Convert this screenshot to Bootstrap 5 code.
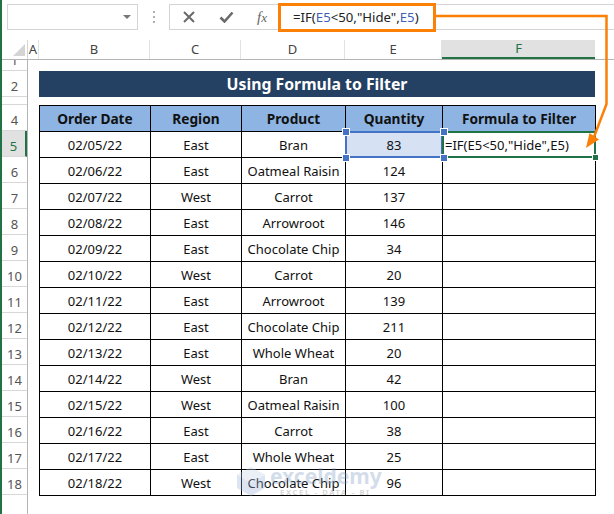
<!DOCTYPE html>
<html lang="en">
<head>
<meta charset="utf-8">
<title>Using Formula to Filter</title>
<link rel="stylesheet" href="https://cdn.jsdelivr.net/npm/bootstrap@5.3.0/dist/css/bootstrap.min.css">
<style>
html,body{margin:0;height:514px;overflow:hidden;background:#fff}
body{font-family:"Noto Sans","Open Sans",sans-serif;font-size:13px;color:#111;width:614px;position:relative}
.xl-app{height:514px;border-left:2px solid #217346;background:#fff}
.xl-bar{height:40px;padding:4px 0 0 5px;background:#fff}
.xl-name{width:131px;height:26px;border:1px solid #d4d4d4;padding-right:6px}
.xl-caret{width:0;height:0;border-left:4px solid transparent;border-right:4px solid transparent;border-top:4px solid #777}
.xl-dots{width:31px;height:26px}
.xl-dots i{display:block;width:2px;height:2px;background:#b0b0b0;margin:1.500px auto}
.xl-btns{width:111px;height:26px;border:1px solid #d4d4d4;padding:0 12px 0 13px}
.xl-fx{font-family:"Liberation Serif",serif;font-style:italic;font-size:15px;color:#666;line-height:1}
.xl-input{flex:1;height:26px;border-top:1px solid #d4d4d4;border-bottom:1px solid #d4d4d4}
.xl-hdr{height:20px;border-bottom:1px solid #b5b5b5;background:#fff;font-size:13px;color:#444}
.xl-corner{width:26px;position:relative;border-right:1px solid #d4d4d4}
.xl-corner::after{content:"";position:absolute;right:2px;bottom:3px;border-left:12px solid transparent;border-bottom:12px solid #d4d4d4}
.xl-h{display:flex;align-items:center;justify-content:center;border-right:1px solid #e2e2e2}
.xl-h.on{background:#e1e1e1;border-bottom:2px solid #217346;color:#217346;border-right:0}
.xl-a{width:11px}.xl-b{width:111px}.xl-c{width:91px}.xl-d{width:104px}.xl-e{width:97px}.xl-f{width:153px}
.xl-body{height:454px;overflow:hidden}
.xl-rows{width:26px;border-right:1px solid #b5b5b5;font-size:13px;color:#555}
.xl-r{display:flex;align-items:flex-end;justify-content:center;border-bottom:1px solid #d8d8d8;height:26px;line-height:20px;overflow:hidden}
.xl-r.sm1{height:11px}.xl-r.sm3{height:8px;line-height:26px}
.xl-r.on{background:#e1e1e1;color:#217346;border-right:2px solid #217346}
.xl-sheet{padding:11px 0 0 11px}
.xl-banner{width:556px;height:26px;background:#244062;color:#fff;font-weight:700;font-size:15.800px;line-height:26px;text-align:center;margin-bottom:8px}
.xl-table{width:556px;table-layout:fixed;border-collapse:collapse;margin:0}
.xl-table th,.xl-table td{height:26px;padding:0;border:1px solid #000;text-align:center;vertical-align:middle;line-height:24px;font-size:13px;white-space:nowrap;background:#fff}
.xl-table th{background:#8db4e2;font-weight:700;font-size:13.700px}
.xl-table td.sel{background:#d6e2f4}
.xl-table td.edit{text-align:left;padding-left:2px;font-size:13px}
.xl-selE{position:absolute;left:345px;top:131px;width:98px;height:27px;border:2px solid #4472c4;pointer-events:none}
.xl-selF{position:absolute;left:442px;top:131px;width:154px;height:27px;border:2px solid #217346;pointer-events:none}
.xl-dot{position:absolute;width:6px;height:6px;background:#4472c4;border:1px solid #fff;box-sizing:content-box}
.xl-gdot{position:absolute;left:592px;top:154px;width:7px;height:7px;background:#217346;border:1px solid #fff}
.xl-orange{position:absolute;left:278px;top:3px;width:158px;height:29px;border:3px solid #fb8005;padding-left:12px;line-height:23px;font-size:13.200px;color:#222;background:#fff;white-space:nowrap}
.xl-ref{color:#3f5fb5}
.xl-arrow{position:absolute;left:0;top:0;pointer-events:none}
.xl-mark{position:absolute;left:236px;top:466px;pointer-events:none;opacity:.34}
.xl-mark b{position:absolute;left:34px;top:-3px;font-size:21px;line-height:26px;color:#7f9cc4;font-weight:700;white-space:nowrap}
.xl-mark span{position:absolute;left:44px;top:21px;font-size:7.500px;letter-spacing:1.700px;line-height:10px;color:#8a8a8a;font-weight:700;white-space:nowrap}
</style>
</head>
<body>
<div class="xl-app">
  <div class="xl-bar d-flex">
    <div class="xl-name d-flex align-items-center justify-content-end"><span class="xl-caret"></span></div>
    <div class="xl-dots d-flex flex-column justify-content-center"><i></i><i></i><i></i></div>
    <div class="xl-btns d-flex align-items-center justify-content-between">
      <svg width="12" height="12" viewBox="0 0 12 12"><path d="M1 1L11 11M11 1L1 11" stroke="#6a6a6a" stroke-width="2" fill="none"/></svg>
      <svg width="15" height="12" viewBox="0 0 15 12"><path d="M1.500 6.500L5.500 10.500L13.500 1.500" stroke="#6a6a6a" stroke-width="2.600" fill="none"/></svg>
      <span class="xl-fx">f<small>x</small></span>
    </div>
    <div class="xl-input"></div>
  </div>
  <div class="xl-hdr d-flex">
    <div class="xl-corner"></div>
    <div class="xl-h xl-a">A</div><div class="xl-h xl-b">B</div><div class="xl-h xl-c">C</div><div class="xl-h xl-d">D</div><div class="xl-h xl-e">E</div><div class="xl-h xl-f on">F</div>
  </div>
  <div class="xl-body d-flex">
    <div class="xl-rows">
      <div class="xl-r sm1">1</div><div class="xl-r">2</div><div class="xl-r sm3">3</div><div class="xl-r">4</div><div class="xl-r on">5</div><div class="xl-r">6</div><div class="xl-r">7</div><div class="xl-r">8</div><div class="xl-r">9</div><div class="xl-r">10</div><div class="xl-r">11</div><div class="xl-r">12</div><div class="xl-r">13</div><div class="xl-r">14</div><div class="xl-r">15</div><div class="xl-r">16</div><div class="xl-r">17</div><div class="xl-r">18</div>
    </div>
    <div class="xl-sheet">
      <div class="xl-banner">Using Formula to Filter</div>
      <table class="xl-table">
        <colgroup><col style="width:111px"><col style="width:91px"><col style="width:104px"><col style="width:97px"><col style="width:153px"></colgroup>
        <thead><tr><th>Order Date</th><th>Region</th><th>Product</th><th>Quantity</th><th>Formula to Filter</th></tr></thead>
        <tbody>
          <tr><td>02/05/22</td><td>East</td><td>Bran</td><td class="sel">83</td><td class="edit">=IF(E5&lt;50,"Hide",E5)</td></tr>
          <tr><td>02/06/22</td><td>East</td><td>Oatmeal Raisin</td><td>124</td><td></td></tr>
          <tr><td>02/07/22</td><td>West</td><td>Carrot</td><td>137</td><td></td></tr>
          <tr><td>02/08/22</td><td>East</td><td>Arrowroot</td><td>146</td><td></td></tr>
          <tr><td>02/09/22</td><td>East</td><td>Chocolate Chip</td><td>34</td><td></td></tr>
          <tr><td>02/10/22</td><td>West</td><td>Carrot</td><td>20</td><td></td></tr>
          <tr><td>02/11/22</td><td>East</td><td>Arrowroot</td><td>139</td><td></td></tr>
          <tr><td>02/12/22</td><td>East</td><td>Chocolate Chip</td><td>211</td><td></td></tr>
          <tr><td>02/13/22</td><td>East</td><td>Whole Wheat</td><td>20</td><td></td></tr>
          <tr><td>02/14/22</td><td>West</td><td>Bran</td><td>42</td><td></td></tr>
          <tr><td>02/15/22</td><td>West</td><td>Oatmeal Raisin</td><td>100</td><td></td></tr>
          <tr><td>02/16/22</td><td>East</td><td>Carrot</td><td>38</td><td></td></tr>
          <tr><td>02/17/22</td><td>East</td><td>Whole Wheat</td><td>25</td><td></td></tr>
          <tr><td>02/18/22</td><td>West</td><td>Chocolate Chip</td><td>96</td><td></td></tr>
        </tbody>
      </table>
    </div>
  </div>
</div>
<div class="xl-selE"></div>
<div class="xl-selF"></div>
<span class="xl-dot" style="left:342px;top:128px"></span><span class="xl-dot" style="left:440px;top:128px"></span><span class="xl-dot" style="left:342px;top:154px"></span><span class="xl-dot" style="left:440px;top:154px"></span>
<span class="xl-gdot"></span>
<div class="xl-orange">=IF(<span class="xl-ref">E5</span>&lt;50,"Hide",<span class="xl-ref">E5</span>)</div>
<svg class="xl-arrow" width="614" height="514" viewBox="0 0 614 514"><path d="M436 16H606.500V104L594 137" stroke="#fb8005" stroke-width="2.500" fill="none"/><path d="M586 148L589.500 133L599 139.500Z" fill="#fb8005"/></svg>
<div class="xl-mark">
  <svg width="30" height="30" viewBox="0 0 30 30"><path d="M15 1L29 9V22L15 30L1 22V9Z" fill="#9db6dc"/><path d="M15 1L29 9L15 17L1 9Z" fill="#c5d4ea"/></svg>
  <b>exceldemy</b><span>EXCEL - DATA - BI</span>
</div>
</body>
</html>
